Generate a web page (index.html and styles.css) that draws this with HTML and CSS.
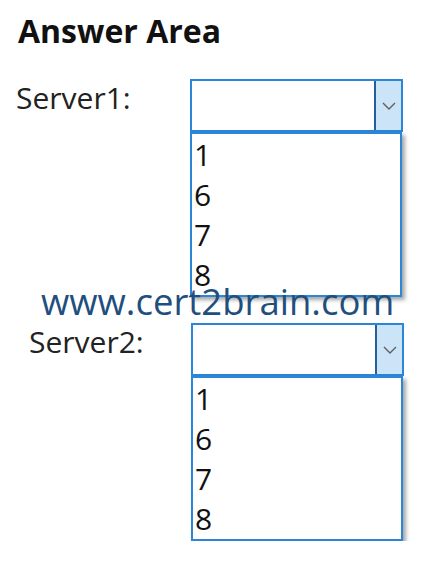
FILE: index.html
```html
<!DOCTYPE html>
<html lang="en">
<head>
  <meta charset="UTF-8" />
  <title>Answer Area</title>
  <link rel="stylesheet" href="styles.css">
</head>
<body>
  <div class="sheet">
    <h1 class="title">Answer Area</h1>

    <div class="field">
      <div class="field-label">Server1:</div>
      <div class="picker">
        <div class="combo">
          <div class="combo-value"></div>
          <div class="combo-btn">
            <svg width="14" height="8" viewBox="0 0 14 8"><path d="M1 1 L7 7 L13 1" fill="none" stroke="#5f5f5f" stroke-width="1.4"/></svg>
          </div>
        </div>
        <ul class="options">
          <li>1</li>
          <li>6</li>
          <li>7</li>
          <li>8</li>
        </ul>
      </div>
    </div>

    <div class="field field--lower">
      <div class="field-label">Server2:</div>
      <div class="picker">
        <div class="combo">
          <div class="combo-value"></div>
          <div class="combo-btn">
            <svg width="14" height="8" viewBox="0 0 14 8"><path d="M1 1 L7 7 L13 1" fill="none" stroke="#5f5f5f" stroke-width="1.4"/></svg>
          </div>
        </div>
        <ul class="options">
          <li>1</li>
          <li>6</li>
          <li>7</li>
          <li>8</li>
        </ul>
      </div>
    </div>

    <div class="watermark">www.cert2brain.com</div>
  </div>
</body>
</html>
```

FILE: styles.css
```css
* {
  box-sizing: border-box;
  margin: 0;
  padding: 0;
}

body {
  background: #fff;
  font-family: 'Open Sans', 'Noto Sans', sans-serif;
  color: #1a1a1a;
}

.sheet {
  position: relative;
  padding-top: 11px;
}

.title {
  font-size: 32px;
  font-weight: 700;
  line-height: 40px;
  color: #111;
  margin: 0 0 28px 18px;
}

.field {
  display: grid;
  grid-template-columns: 190px 213px;
  align-items: start;
}

.field--lower {
  margin-top: 26px;
  padding-left: 1px;
}

.field-label {
  font-size: 30px;
  line-height: 40px;
  margin-top: -1px;
  padding-left: 16px;
  color: #222;
}

.field--lower .field-label {
  padding-left: 28px;
}

.combo {
  display: flex;
  height: 53px;
  border: 2px solid #2b86d8;
  background: #fff;
}

.combo-value {
  flex: 1;
}

.combo-btn {
  width: 27px;
  border-left: 2px solid #245f98;
  background: #cce4f7;
  display: flex;
  align-items: center;
  justify-content: center;
}

.options {
  list-style: none;
  width: 212px;
  border: 2px solid #2b86d8;
  padding-top: 1px;
  background: #fff;
  box-shadow: 3px 3px 4px rgba(0, 0, 0, 0.35);
}

.options li {
  font-size: 30px;
  line-height: 40px;
  padding-left: 2px;
  color: #111;
}

/* site stamp printed across the form */
.watermark {
  position: absolute;
  left: 41px;
  top: 286px;
  font-size: 36.5px;
  line-height: 30px;
  color: #1f4f7e;
}
```
